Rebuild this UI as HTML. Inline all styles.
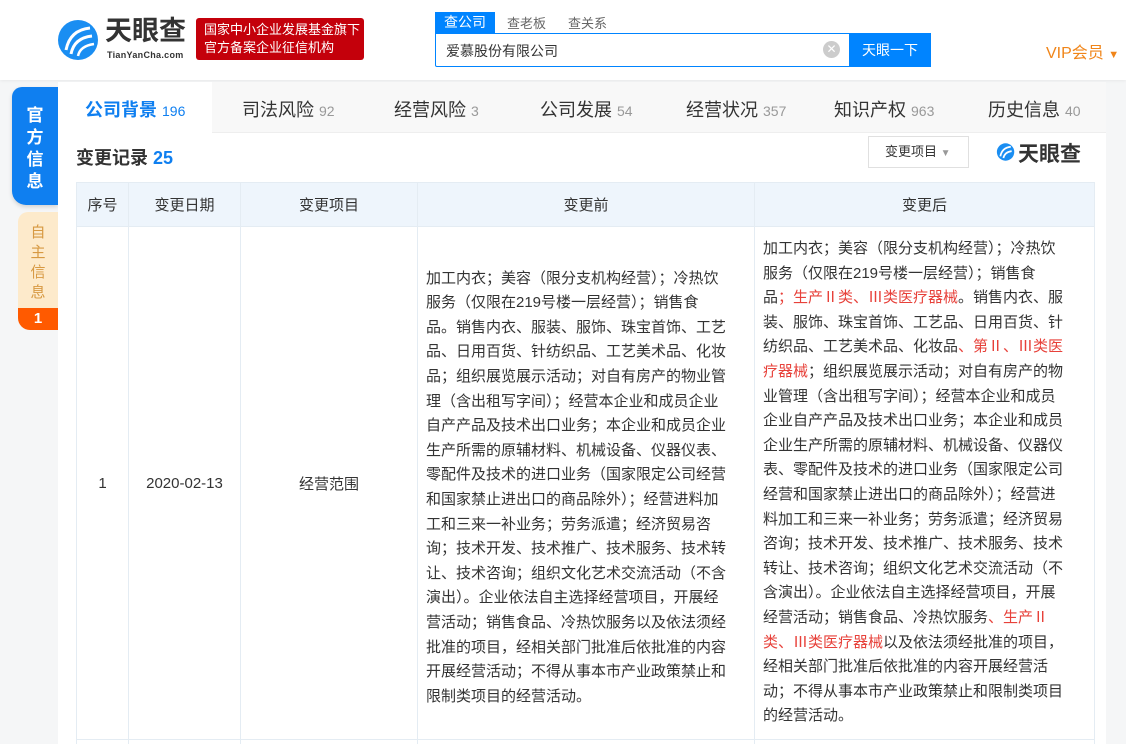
<!DOCTYPE html>
<html><head><meta charset="utf-8">
<style>
*{margin:0;padding:0;box-sizing:border-box}
html,body{width:1126px;height:744px;overflow:hidden}
body{background:#f5f6f7;font-family:"Liberation Sans","Noto Sans CJK SC",sans-serif;color:#333;position:relative}
.hdr{position:absolute;left:0;top:0;width:1126px;height:80px;background:#fff;box-shadow:0 1px 3px rgba(0,0,0,.06)}
.abs{position:absolute}
.main{position:absolute;left:58px;top:82px;width:1048px;height:662px;background:#fff;overflow:hidden}
.tabs{position:absolute;left:0;top:0;width:1048px;height:51px;background:#f8f8f8;border-bottom:1px solid #eee}
.tab{position:absolute;top:14px;font-size:18px;color:#333;white-space:nowrap}
.tab span{font-size:14px;color:#999}
table{position:absolute;left:18px;top:100px;border-collapse:collapse;font-size:15px}
td,th{border:1px solid #e4ecf3;font-weight:normal;text-align:center;vertical-align:middle}
th{background:#eef5fc;height:44px;color:#333}
td.t{text-align:left;line-height:24.6px;padding:0 8px;color:#333}
.r{color:#e7413a}
</style></head><body>
<div class="hdr">
  <svg class="abs" style="left:56px;top:18px" width="46" height="44" viewBox="0 0 46 44">
    <circle cx="22" cy="22" r="20" fill="#1a8ef2"/>
    <path d="M10 32 Q14 12 34 10" stroke="#fff" stroke-width="3" fill="none"/>
    <path d="M15 36 Q18 20 36 18" stroke="#fff" stroke-width="3" fill="none"/>
    <path d="M22 38 Q24 28 38 26" stroke="#fff" stroke-width="2.5" fill="none"/>
  </svg>
  <div class="abs" style="left:105px;top:15px;font-size:27px;line-height:32px;font-weight:bold;color:#333">天眼查</div>
  <div class="abs" style="left:107px;top:50px;font-size:9px;font-weight:bold;color:#333;letter-spacing:.3px">TianYanCha.com</div>
  <div class="abs" style="left:196px;top:18px;width:168px;height:42px;background:#c4000b;border-radius:3px;color:#fff;font-size:13px;line-height:18px;padding:3px 0 0 8px;white-space:nowrap">国家中小企业发展基金旗下<br>官方备案企业征信机构</div>
  <div class="abs" style="left:435px;top:12px;width:60px;height:21px;background:#0084ff;color:#fff;font-size:14px;text-align:center;line-height:21px">查公司</div>
  <div class="abs" style="left:507px;top:13px;font-size:13px;color:#666">查老板</div>
  <div class="abs" style="left:568px;top:13px;font-size:13px;color:#666">查关系</div>
  <div class="abs" style="left:435px;top:33px;width:496px;height:34px;border:1px solid #0084ff;border-radius:0 2px 2px 2px;background:#fff"></div>
  <div class="abs" style="left:446px;top:41px;font-size:14px;color:#333">爱慕股份有限公司</div>
  <div class="abs" style="left:823px;top:41px;width:17px;height:17px;border-radius:50%;background:#ccc;color:#fff;font-size:12px;text-align:center;line-height:17px">✕</div>
  <div class="abs" style="left:849px;top:33px;width:82px;height:34px;background:#0084ff;color:#fff;font-size:14px;text-align:center;line-height:34px">天眼一下</div>
  <div class="abs" style="left:1046px;top:39px;font-size:16px;color:#f08519">VIP会员 <span style="font-size:11px">▼</span></div>
</div>
<div class="abs" style="left:12px;top:87px;width:46px;height:118px;background:#0f7ff0;border-radius:10px 0 0 14px;color:#fff;font-size:17px;font-weight:bold;text-align:center;line-height:22px;padding-top:18px;box-shadow:0 2px 4px rgba(0,0,0,.15)">官<br>方<br>信<br>息</div>
<div class="abs" style="left:18px;top:212px;width:40px;height:118px;background:#fdeacb;border-radius:10px 0 0 12px;overflow:hidden;color:#d79942;font-size:15px;text-align:center;line-height:20px;padding-top:11px">自<br>主<br>信<br>息
  <div style="position:absolute;left:0;bottom:0;width:40px;height:22px;background:#ff5a00;color:#fff;font-weight:bold;font-size:15px;line-height:22px">1</div></div>
<div class="main">
  <div class="tabs">
    <div class="abs" style="left:0;top:0;width:154px;height:52px;background:#fff"></div>
    <div class="tab" style="left:27px;color:#0f7ff0;font-weight:bold">公司背景 <span style="color:#0f7ff0;font-weight:normal">196</span></div>
    <div class="tab" style="left:184px">司法风险 <span>92</span></div>
    <div class="tab" style="left:336px">经营风险 <span>3</span></div>
    <div class="tab" style="left:482px">公司发展 <span>54</span></div>
    <div class="tab" style="left:628px">经营状况 <span>357</span></div>
    <div class="tab" style="left:776px">知识产权 <span>963</span></div>
    <div class="tab" style="left:930px">历史信息 <span>40</span></div>
  </div>
  <div class="abs" style="left:18px;top:62px;font-size:18px;font-weight:bold;color:#333">变更记录 <span style="color:#0f7ff0">25</span></div>
  <div class="abs" style="left:810px;top:54px;width:101px;height:32px;border:1px solid #e0e0e0;font-size:13px;color:#333;line-height:30px;padding-left:16px">变更项目 <span style="color:#999;font-size:10px">▼</span></div>
  <svg class="abs" style="left:938px;top:60px" width="20" height="20" viewBox="0 0 46 44"><circle cx="22" cy="22" r="20" fill="#1a8ef2"/><path d="M10 32 Q14 12 34 10" stroke="#fff" stroke-width="4" fill="none"/><path d="M17 36 Q20 22 36 20" stroke="#fff" stroke-width="4" fill="none"/></svg>
  <div class="abs" style="left:960px;top:56px;font-size:21px;font-weight:bold;color:#333">天眼查</div>
  <table>
    <tr><th style="width:52px">序号</th><th style="width:112px">变更日期</th><th style="width:177px">变更项目</th><th style="width:337px">变更前</th><th style="width:340px">变更后</th></tr>
    <tr style="height:513px">
      <td>1</td><td>2020-02-13</td><td>经营范围</td>
      <td class="t" style="padding-top:10px">加工内衣；美容（限分支机构经营）；冷热饮<br>服务（仅限在219号楼一层经营）；销售食<br>品。销售内衣、服装、服饰、珠宝首饰、工艺<br>品、日用百货、针纺织品、工艺美术品、化妆<br>品；组织展览展示活动；对自有房产的物业管<br>理（含出租写字间）；经营本企业和成员企业<br>自产产品及技术出口业务；本企业和成员企业<br>生产所需的原辅材料、机械设备、仪器仪表、<br>零配件及技术的进口业务（国家限定公司经营<br>和国家禁止进出口的商品除外）；经营进料加<br>工和三来一补业务；劳务派遣；经济贸易咨<br>询；技术开发、技术推广、技术服务、技术转<br>让、技术咨询；组织文化艺术交流活动（不含<br>演出）。企业依法自主选择经营项目，开展经<br>营活动；销售食品、冷热饮服务以及依法须经<br>批准的项目，经相关部门批准后依批准的内容<br>开展经营活动；不得从事本市产业政策禁止和<br>限制类项目的经营活动。</td>
      <td class="t">加工内衣；美容（限分支机构经营）；冷热饮<br>服务（仅限在219号楼一层经营）；销售食<br>品<span class="r">；生产Ⅱ类、Ⅲ类医疗器械</span>。销售内衣、服<br>装、服饰、珠宝首饰、工艺品、日用百货、针<br>纺织品、工艺美术品、化妆品<span class="r">、第Ⅱ、Ⅲ类医<br>疗器械</span>；组织展览展示活动；对自有房产的物<br>业管理（含出租写字间）；经营本企业和成员<br>企业自产产品及技术出口业务；本企业和成员<br>企业生产所需的原辅材料、机械设备、仪器仪<br>表、零配件及技术的进口业务（国家限定公司<br>经营和国家禁止进出口的商品除外）；经营进<br>料加工和三来一补业务；劳务派遣；经济贸易<br>咨询；技术开发、技术推广、技术服务、技术<br>转让、技术咨询；组织文化艺术交流活动（不<br>含演出）。企业依法自主选择经营项目，开展<br>经营活动；销售食品、冷热饮服务<span class="r">、生产Ⅱ<br>类、Ⅲ类医疗器械</span>以及依法须经批准的项目，<br>经相关部门批准后依批准的内容开展经营活<br>动；不得从事本市产业政策禁止和限制类项目<br>的经营活动。</td>
    </tr>
    <tr style="height:20px"><td></td><td></td><td></td><td></td><td></td></tr>
  </table>
</div>
</body></html>
